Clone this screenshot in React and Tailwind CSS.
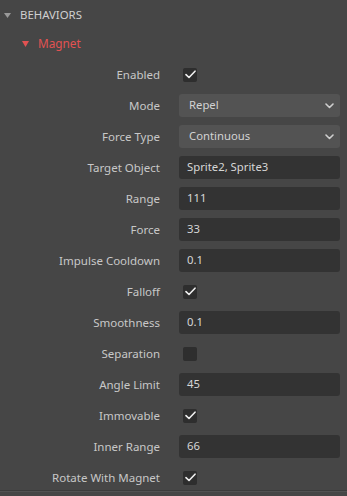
import React from "react";

const Check = ({ checked }) => (
  <div className="w-[14px] h-[14px] rounded-[2px] bg-[#2e2e2e] flex items-center justify-center">
    {checked && (
      <svg width="11" height="9" viewBox="0 0 11 9" fill="none">
        <path d="M1 4.6 L4 7.5 L10 1.2" stroke="#f0f0f0" strokeWidth="1.6" strokeLinecap="round" strokeLinejoin="round" />
      </svg>
    )}
  </div>
);

const Chevron = () => (
  <svg width="9" height="6" viewBox="0 0 9 6" fill="none">
    <path d="M1 1 L4.5 4.5 L8 1" stroke="#cfcfcf" strokeWidth="1.6" strokeLinecap="round" strokeLinejoin="round" />
  </svg>
);

const rows = [
  ["Enabled", "check", true],
  ["Mode", "select", "Repel"],
  ["Force Type", "select", "Continuous"],
  ["Target Object", "input", "Sprite2, Sprite3"],
  ["Range", "input", "111"],
  ["Force", "input", "33"],
  ["Impulse Cooldown", "input", "0.1"],
  ["Falloff", "check", true],
  ["Smoothness", "input", "0.1"],
  ["Separation", "check", false],
  ["Angle Limit", "input", "45"],
  ["Immovable", "check", true],
  ["Inner Range", "input", "66"],
  ["Rotate With Magnet", "check", true],
];

export default function App() {
  return (
    <div
      className="w-[347px] h-[496px] bg-[#464646] text-[#c9c9c9] overflow-hidden relative"
      style={{ fontFamily: '"Noto Sans", "Open Sans", sans-serif' }}
    >
      <div className="h-[30px] flex items-center pl-[4px] gap-[9px]">
        <svg width="7" height="5" viewBox="0 0 7 5">
          <path d="M0 0 L7 0 L3.5 5 Z" fill="#9a9a9a" />
        </svg>
        <span className="text-[11.4px] text-[#d0d0d0]">BEHAVIORS</span>
      </div>
      <div className="h-[28px] flex items-center pl-[22px] gap-[9px]">
        <svg width="7" height="6" viewBox="0 0 7 6">
          <path d="M0 0 L7 0 L3.5 6 Z" fill="#e25252" />
        </svg>
        <span className="text-[11.8px] text-[#e25252]">Magnet</span>
      </div>
      <div className="flex flex-col gap-[8px] pt-[5px]">
        {rows.map(([label, type, val]) => (
          <div key={label} className="h-[23px] flex items-center">
            <div className="w-[160px] text-right text-[11.5px] text-[#c8c8c8] leading-none">{label}</div>
            <div className="ml-[19px] w-[161px] h-full flex items-center">
              {type === "check" && (
                <div className="pl-[4px]">
                  <Check checked={val} />
                </div>
              )}
              {type === "select" && (
                <div className="w-full h-full rounded-[3px] bg-[#535353] flex items-center justify-between pl-[10px] pr-[6px] text-[11.3px] text-[#d2d2d2]">
                  <span>{val}</span>
                  <Chevron />
                </div>
              )}
              {type === "input" && (
                <div className="w-full h-full rounded-[3px] bg-[#333333] flex items-center pl-[8px] text-[11.3px] text-[#d6d6d6]">
                  {val}
                </div>
              )}
            </div>
          </div>
        ))}
      </div>
      <div className="absolute left-0 right-0 top-[490px] h-[1px] bg-[#3c3c3c]" />
      <div className="absolute left-0 right-0 top-[491px] h-[1px] bg-[#525252]" />
    </div>
  );
}
